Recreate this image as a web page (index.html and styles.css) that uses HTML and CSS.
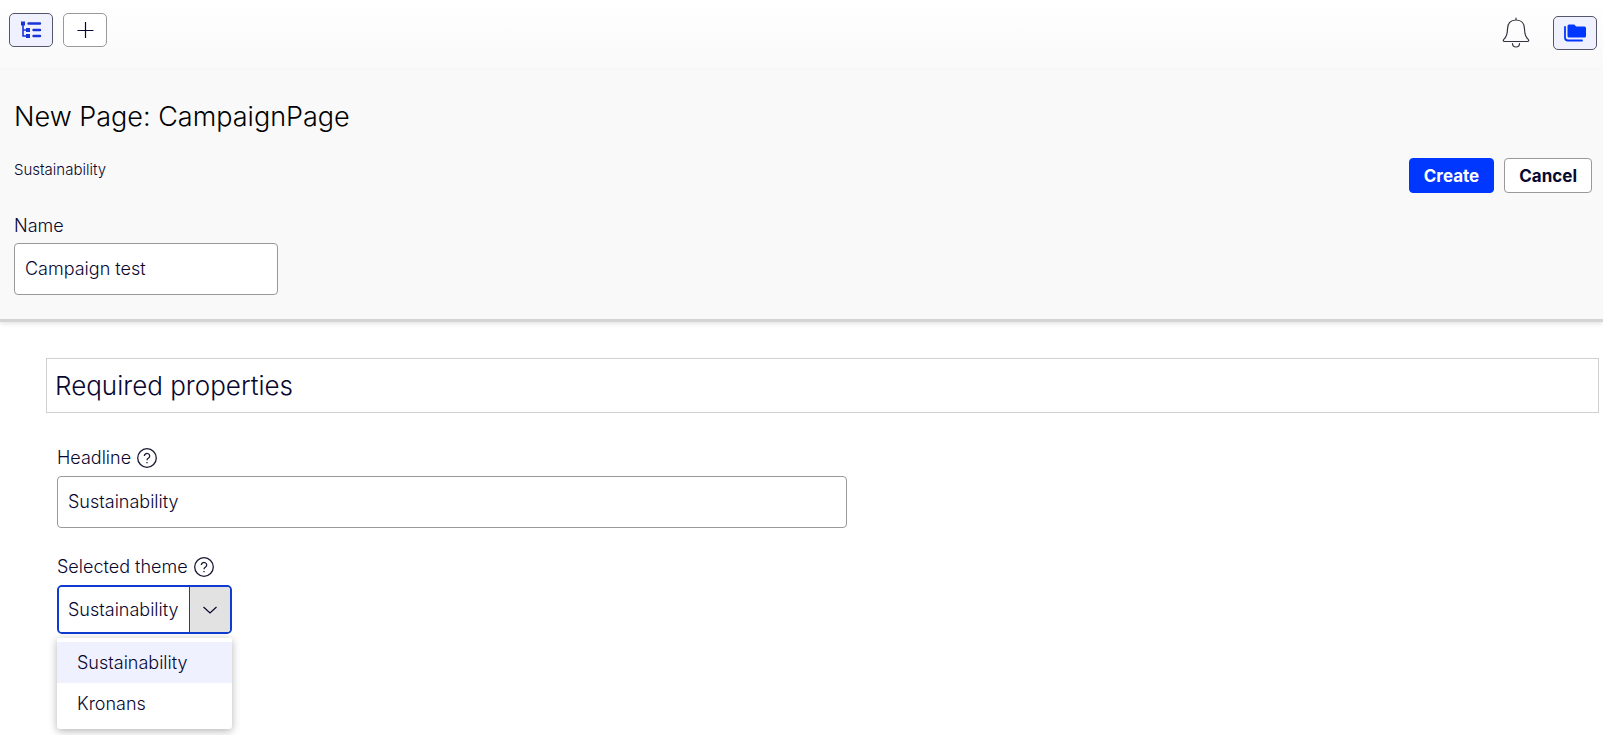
FILE: index.html
```html
<!DOCTYPE html>
<html lang="en">

<head>
    <meta charset="UTF-8">
    <meta name="viewport" content="width=device-width, initial-scale=1.0">
    <title>New Page: CampaignPage</title>
    <link rel="stylesheet" href="styles.css">
</head>

<body>
    <!-- Toolbar -->
    <header class="toolbar">
        <div class="toolbar-group">
            <button class="icon-btn active" type="button" aria-label="Toggle navigation pane">
                <svg width="22" height="18" viewBox="0 0 22 18">
                    <path d="M3 3v12h4M3 9h4" fill="none" stroke="currentColor" stroke-width="1.600" />
                    <path d="M1 .5h4v4H1zM6 7h4v4H6zM6 13h4v4H6z" fill="currentColor" />
                    <path d="M8.500 2.500h11.500M13.500 9H20M13.500 15H20" fill="none" stroke="currentColor" stroke-width="2.400" stroke-linecap="round" />
                </svg>
            </button>
            <button class="icon-btn" type="button" aria-label="Add">
                <svg width="18" height="18" viewBox="0 0 18 18">
                    <path d="M9.500 1v16M1.500 9.500h16" fill="none" stroke="currentColor" stroke-width="1.200" />
                </svg>
            </button>
        </div>
        <div class="toolbar-group toolbar-right">
            <button class="bell-btn" type="button" aria-label="Notifications">
                <svg width="28" height="32" viewBox="0 0 28 32">
                    <path d="M14 1v2M14 3C8.500 3 5.500 6.500 5.500 12c0 5-1 8-3.700 10.400-.9.900-.5 2.100.7 2.100h23c1.200 0 1.600-1.200.7-2.100C23.500 20 22.500 17 22.500 12c0-5.500-3-9-8.500-9zM10.500 26.500a3.500 3.500 0 0 0 7 0" fill="none" stroke="currentColor" stroke-width="1.200" stroke-linecap="round" />
                </svg>
            </button>
            <button class="icon-btn active" type="button" aria-label="Toggle assets pane">
                <svg width="24" height="20" viewBox="0 0 24 20">
                    <path d="M6 1.500h5.200l2 2H21.500a1.500 1.500 0 0 1 1.500 1.500v8a1.500 1.500 0 0 1-1.500 1.500H6A1.500 1.500 0 0 1 4.500 13V3A1.500 1.500 0 0 1 6 1.500z" fill="#0037ff" />
                    <path d="M2 4v10.500a3 3 0 0 0 3 3H19" fill="none" stroke="#0037ff" stroke-width="1.800" stroke-linecap="round" />
                </svg>
            </button>
        </div>
    </header>

    <!-- Page header -->
    <section class="page-header">
        <h1>New Page: CampaignPage</h1>
        <div class="header-row">
            <div class="breadcrumb">Sustainability</div>
            <div class="actions">
                <button class="btn btn-primary" type="submit" form="properties">Create</button>
                <button class="btn" type="button">Cancel</button>
            </div>
        </div>
        <label class="field-label" for="name">Name</label>
        <input class="text-input name-input" id="name" type="text" form="properties" value="Campaign test">
    </section>

    <!-- Properties -->
    <main class="content">
        <h2>Required properties</h2>
        <form class="properties" id="properties">
            <div class="field">
                <div class="label-row">
                    <label class="field-label" for="headline">Headline</label>
                    <svg class="help" width="20" height="20" viewBox="0 0 20 20">
                        <circle cx="10" cy="10" r="9.300" />
                        <path d="M7.300 8a2.700 2.500 0 1 1 4.300 2c-1 .7-1.600 1.100-1.600 2.200M10 14v1.300" />
                    </svg>
                </div>
                <input class="text-input" id="headline" type="text" value="Sustainability">
            </div>
            <div class="field">
                <div class="label-row">
                    <label class="field-label" for="theme">Selected theme</label>
                    <svg class="help" width="20" height="20" viewBox="0 0 20 20">
                        <circle cx="10" cy="10" r="9.300" />
                        <path d="M7.300 8a2.700 2.500 0 1 1 4.300 2c-1 .7-1.600 1.100-1.600 2.200M10 14v1.300" />
                    </svg>
                </div>
                <div class="theme-picker">
                    <div class="select-box">
                        <select id="theme">
                            <option selected>Sustainability</option>
                            <option>Kronans</option>
                        </select>
                        <span class="select-arrow">
                            <svg width="16" height="10" viewBox="0 0 16 10">
                                <path d="M1.500 2L8 8l6.500-6" fill="none" stroke="currentColor" stroke-width="1.200" />
                            </svg>
                        </span>
                    </div>
                    <ul class="theme-menu">
                        <li class="selected">Sustainability</li>
                        <li>Kronans</li>
                    </ul>
                </div>
            </div>
        </form>
    </main>
</body>

</html>
```
FILE: styles.css
```css
* {
    box-sizing: border-box;
}

body {
    min-height: 100vh;
    margin: 0;
    background: #fff;
    color: #080730;
    font-family: Inter, sans-serif;
    font-size: 18px;
    font-weight: 300;
    line-height: 24px;
}

button,
input,
select {
    font: inherit;
    color: inherit;
}

/* Toolbar */
.toolbar {
    display: flex;
    justify-content: space-between;
    padding: 13px 6px 20px 9px;
    background: linear-gradient(#fff, #f9f9f9);
}

.toolbar-group {
    display: flex;
    gap: 10px;
}

.toolbar-right {
    align-items: center;
    gap: 23px;
    padding-top: 3px;
}

.icon-btn {
    display: flex;
    align-items: center;
    justify-content: center;
    width: 44px;
    height: 34px;
    padding: 0;
    background: #fff;
    border: 1px solid #999;
    border-radius: 5px;
    cursor: pointer;
}

.icon-btn.active {
    background: #f0f1ff;
    border-color: #55556b;
    color: #1a35d6;
}

.bell-btn {
    display: flex;
    padding: 0;
    background: none;
    border: none;
    color: #333340;
    cursor: pointer;
}

/* Page header */
.page-header {
    position: relative;
    padding: 27px 11px 24px 14px;
    background: #f9f9f9;
    border-bottom: 3px solid #d4d4d4;
    box-shadow: 0 2px 4px rgba(0, 0, 0, 0.1);
}

h1 {
    margin: 0;
    color: #000;
    font-size: 27px;
    font-weight: 300;
    line-height: 40px;
}

.header-row {
    display: flex;
    justify-content: space-between;
    margin: 21px 0;
}

.breadcrumb {
    font-size: 15px;
}

.actions {
    display: flex;
    gap: 10px;
}

.btn {
    height: 35px;
    padding: 0 14px;
    background: #fff;
    border: 1px solid #999;
    border-radius: 4px;
    font-size: 17px;
    font-weight: 700;
    cursor: pointer;
}

.btn-primary {
    background: #0037ff;
    border-color: #0037ff;
    color: #fff;
}

/* Fields */
.field-label {
    display: block;
}

.text-input {
    display: block;
    width: 100%;
    height: 52px;
    padding: 0 10px 2px;
    background: #fff;
    border: 1px solid #999;
    border-radius: 4px;
}

.name-input {
    max-width: 264px;
    margin-top: 5px;
}

/* Properties */
.content {
    padding: 36px 4px 6px 46px;
}

h2 {
    margin: 0;
    padding: 7px 8px;
    border: 1px solid #d0d0d0;
    font-size: 26px;
    font-weight: 300;
    line-height: 39px;
}

.properties {
    display: flex;
    flex-direction: column;
    gap: 27px;
    max-width: 801px;
    padding: 33px 0 0 11px;
}

.label-row {
    display: flex;
    align-items: center;
    gap: 6px;
    margin-bottom: 6px;
}

.help {
    fill: none;
    stroke: #1a1a33;
    stroke-width: 1.3;
}

.theme-picker {
    position: relative;
    width: 175px;
}

.select-box {
    display: flex;
    height: 49px;
    border: 2px solid #0f3bd0;
    border-radius: 5px;
    overflow: hidden;
}

.select-box select {
    flex: 1;
    min-width: 0;
    padding: 0 9px;
    appearance: none;
    background: #fff;
    border: none;
    outline: none;
}

.select-arrow {
    display: flex;
    align-items: center;
    justify-content: center;
    width: 41px;
    background: #e2e2e2;
    border-left: 1px solid #0f3bd0;
    pointer-events: none;
}

.theme-menu {
    position: absolute;
    top: 100%;
    left: 0;
    width: 100%;
    margin: 4px 0 0;
    padding: 4px 0 5px;
    list-style: none;
    background: #fff;
    border-radius: 0 0 3px 3px;
    box-shadow: 0 2px 8px rgba(0, 0, 0, 0.3);
}

.theme-menu li {
    padding: 9px 20px 8px;
}

.theme-menu .selected {
    background: #f0f1ff;
}
```
